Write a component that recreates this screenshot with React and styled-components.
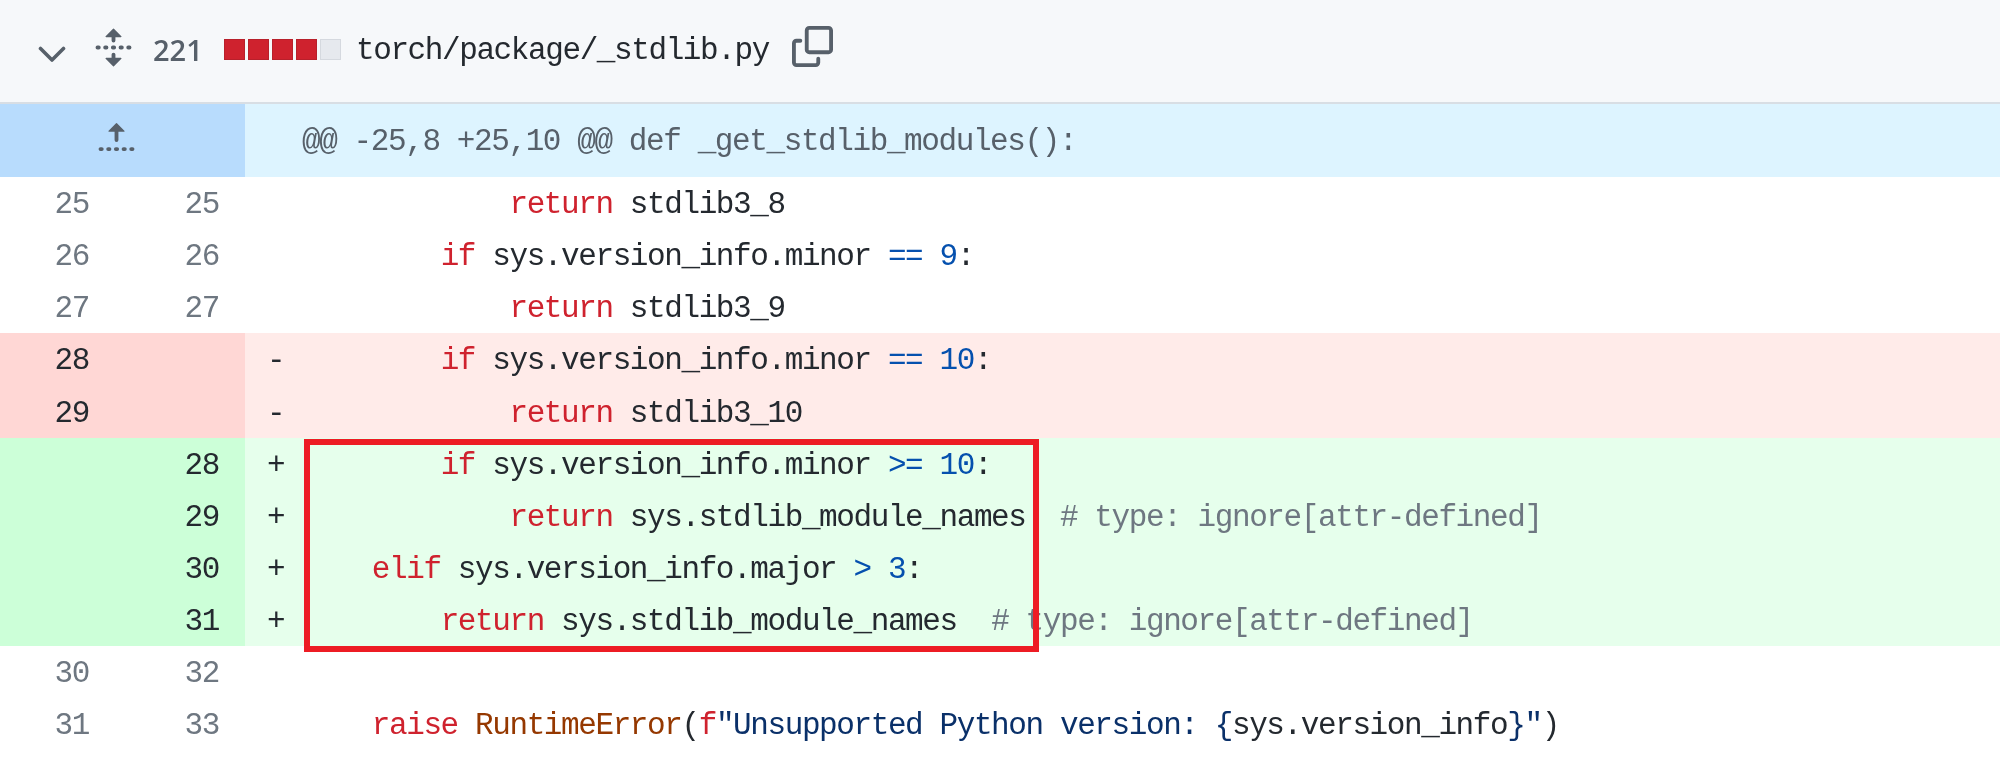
import React from "react";
import styled, { createGlobalStyle } from "styled-components";

const Global = createGlobalStyle`
  html, body { margin: 0; padding: 0; background: #fff; }
  #root { width: 2000px; height: 765px; overflow: hidden; }
`;

const MONO = `"Liberation Mono", "DejaVu Sans Mono", monospace`;

const Page = styled.div`
  width: 2000px;
  height: 765px;
  background: #fff;
  overflow: hidden;
  filter: blur(0.7px);
  font-family: ${MONO};
  font-size: 31px;
  letter-spacing: -1.4px;
  color: #24292f;
`;

const Toolbar = styled.header`
  height: 102px;
  box-sizing: content-box;
  display: flex;
  align-items: center;
  padding-left: 38px;
  background: #f6f8fa;
  border-bottom: 2px solid #d8dee4;
`;

const Chevron = styled.svg`
  width: 28px;
  height: 17px;
  margin-top: 6px;
  fill: none;
  stroke: #57606a;
  stroke-width: 3.6;
  stroke-linecap: round;
  stroke-linejoin: round;
`;

const ToolIcon = styled.svg`
  width: 41px;
  height: 41px;
  fill: #57606a;
  flex: none;
  margin-left: ${(p) => p.$left}px;
  margin-top: ${(p) => p.$top || 0}px;
`;

const Count = styled.span`
  margin-left: 19px;
  margin-top: -3px;
  width: 71px;
  font-family: "Open Sans", "Liberation Sans", sans-serif;
  font-size: 29px;
  font-weight: 600;
  letter-spacing: 0;
  color: #57606a;
`;

const DiffStat = styled.span`
  display: flex;
  gap: 3px;
  width: 132px;
  margin-top: -3px;
`;

const StatBlock = styled.span`
  width: 21px;
  height: 21px;
  box-sizing: border-box;
  background: ${(p) => (p.$on ? "#cf222e" : "#e6e9ee")};
  border: 1px solid ${(p) => (p.$on ? "#b8202b" : "#d5d9df")};
`;

const FileName = styled.span`
  color: #24292f;
  margin-top: -2px;
`;

const Table = styled.div`
  display: flex;
  flex-direction: column;
`;

const HunkRow = styled.div`
  display: grid;
  grid-template-columns: 245px 1fr;
  grid-template-rows: 73px;
  height: 73px;
`;

const HunkGutter = styled.div`
  background: #b8dcfd;
  padding-left: 96px;
  padding-top: 15px;
  box-sizing: border-box;
`;

const HunkIcon = styled.svg`
  display: block;
  width: 41px;
  height: 41px;
  fill: #57606a;
`;

const HunkCode = styled.div`
  background: #ddf4ff;
  color: #57606a;
  padding-left: 57px;
  line-height: 76px;
  white-space: pre;
`;

const tone = {
  ctx: { num: "#ffffff", code: "#ffffff", ink: "#6e7781" },
  del: { num: "#ffd7d5", code: "#ffebe9", ink: "#24292f" },
  add: { num: "#ccffd8", code: "#e6ffec", ink: "#24292f" },
};

const Row = styled.div`
  display: grid;
  grid-template-columns: 115px 130px 1fr;
  grid-template-rows: 52.15px;
  height: 52.15px;
  line-height: 56.5px;
`;

const LineNo = styled.div`
  background: ${(p) => tone[p.$kind].num};
  color: ${(p) => tone[p.$kind].ink};
  text-align: right;
  padding-right: 26px;
`;

const Code = styled.div`
  display: flex;
  background: ${(p) => tone[p.$kind].code};
  padding-left: 22px;
  white-space: pre;
`;

const Marker = styled.span`
  width: 36px;
  flex: none;
`;

const AddedGroup = styled.div`
  position: relative;
`;

const Annotation = styled.div`
  position: absolute;
  left: 304px;
  top: 1px;
  width: 735px;
  height: 213px;
  box-sizing: border-box;
  border: 6px solid #ed1c24;
  pointer-events: none;
`;

const Kw = styled.span`color: #cf222e;`;
const Num = styled.span`color: #0550ae;`;
const Fn = styled.span`color: #953800;`;
const Str = styled.span`color: #0a3069;`;
const Cm = styled.span`color: #6e7781;`;

const DiffLine = ({ kind, oldNo, newNo, mark = "", children }) => (
  <Row>
    <LineNo $kind={kind}>{oldNo}</LineNo>
    <LineNo $kind={kind}>{newNo}</LineNo>
    <Code $kind={kind}>
      <Marker>{mark}</Marker>
      <span>{children}</span>
    </Code>
  </Row>
);

const COPY_A =
  "M0 6.75C0 5.784.784 5 1.75 5h1.5a.75.75 0 0 1 0 1.5h-1.5a.25.25 0 0 0-.25.25v7.5c0 .138.112.25.25.25h7.5a.25.25 0 0 0 .25-.25v-1.5a.75.75 0 0 1 1.5 0v1.5A1.75 1.75 0 0 1 9.25 16h-7.5A1.75 1.75 0 0 1 0 14.25Z";
const COPY_B =
  "M5 1.75C5 .784 5.784 0 6.75 0h7.5C15.216 0 16 .784 16 1.75v7.5A1.75 1.75 0 0 1 14.25 11h-7.5A1.75 1.75 0 0 1 5 9.25Zm1.75-.25a.25.25 0 0 0-.25.25v7.5c0 .138.112.25.25.25h7.5a.25.25 0 0 0 .25-.25v-7.5a.25.25 0 0 0-.25-.25Z";
const UNFOLD =
  "m8.177.677 2.896 2.896a.25.25 0 0 1-.177.427H8.75v1.25a.75.75 0 0 1-1.5 0V4H5.104a.25.25 0 0 1-.177-.427L7.823.677a.25.25 0 0 1 .354 0ZM7.25 10.75a.75.75 0 0 1 1.5 0V12h2.146a.25.25 0 0 1 .177.427l-2.896 2.896a.25.25 0 0 1-.354 0l-2.896-2.896A.25.25 0 0 1 5.104 12H7.25v-1.25Zm-5-2a.75.75 0 0 0 0-1.5h-.5a.75.75 0 0 0 0 1.5h.5ZM6 8a.75.75 0 0 1-.75.75h-.5a.75.75 0 0 1 0-1.5h.5A.75.75 0 0 1 6 8Zm2.25.75a.75.75 0 0 0 0-1.5h-.5a.75.75 0 0 0 0 1.5h.5ZM12 8a.75.75 0 0 1-.75.75h-.5a.75.75 0 0 1 0-1.5h.5A.75.75 0 0 1 12 8Zm2.25.75a.75.75 0 0 0 0-1.5h-.5a.75.75 0 0 0 0 1.5h.5Z";
const FOLD_UP =
  "M7.823 1.677 4.927 4.573A.25.25 0 0 0 5.104 5H7.25v3.236a.75.75 0 1 0 1.5 0V5h2.146a.25.25 0 0 0 .177-.427L8.177 1.677a.25.25 0 0 0-.354 0ZM13.75 11a.75.75 0 0 0 0 1.5h.5a.75.75 0 0 0 0-1.5h-.5Zm-3.75.75a.75.75 0 0 1 .75-.75h.5a.75.75 0 0 1 0 1.5h-.5a.75.75 0 0 1-.75-.75ZM7.75 11a.75.75 0 0 0 0 1.5h.5a.75.75 0 0 0 0-1.5h-.5ZM4 11.75a.75.75 0 0 1 .75-.75h.5a.75.75 0 0 1 0 1.5h-.5a.75.75 0 0 1-.75-.75ZM1.75 11a.75.75 0 0 0 0 1.5h.5a.75.75 0 0 0 0-1.5h-.5Z";

export default function App() {
  return (
    <Page>
      <Global />
      <Toolbar>
        <Chevron viewBox="0 0 28 17">
          <polyline points="2.5,2.5 14,14 25.5,2.5" />
        </Chevron>
        <ToolIcon viewBox="0 0 16 16" $left={27} $top={-8}>
          <path d={UNFOLD} />
        </ToolIcon>
        <Count>221</Count>
        <DiffStat>
          <StatBlock $on />
          <StatBlock $on />
          <StatBlock $on />
          <StatBlock $on />
          <StatBlock />
        </DiffStat>
        <FileName>torch/package/_stdlib.py</FileName>
        <ToolIcon viewBox="0 0 16 16" $left={23} $top={-10}>
          <path d={COPY_A} />
          <path d={COPY_B} />
        </ToolIcon>
      </Toolbar>
      <Table>
        <HunkRow>
          <HunkGutter>
            <HunkIcon viewBox="0 0 16 16">
              <path d={FOLD_UP} />
            </HunkIcon>
          </HunkGutter>
          <HunkCode>{"@@ -25,8 +25,10 @@ def _get_stdlib_modules():"}</HunkCode>
        </HunkRow>
        <DiffLine kind="ctx" oldNo="25" newNo="25">
          {"            "}<Kw>return</Kw>{" stdlib3_8"}
        </DiffLine>
        <DiffLine kind="ctx" oldNo="26" newNo="26">
          {"        "}<Kw>if</Kw>{" sys.version_info.minor "}<Num>==</Num>{" "}<Num>9</Num>{":"}
        </DiffLine>
        <DiffLine kind="ctx" oldNo="27" newNo="27">
          {"            "}<Kw>return</Kw>{" stdlib3_9"}
        </DiffLine>
        <DiffLine kind="del" oldNo="28" mark="-">
          {"        "}<Kw>if</Kw>{" sys.version_info.minor "}<Num>==</Num>{" "}<Num>10</Num>{":"}
        </DiffLine>
        <DiffLine kind="del" oldNo="29" mark="-">
          {"            "}<Kw>return</Kw>{" stdlib3_10"}
        </DiffLine>
        <AddedGroup>
          <DiffLine kind="add" newNo="28" mark="+">
            {"        "}<Kw>if</Kw>{" sys.version_info.minor "}<Num>&gt;=</Num>{" "}<Num>10</Num>{":"}
          </DiffLine>
          <DiffLine kind="add" newNo="29" mark="+">
            {"            "}<Kw>return</Kw>{" sys.stdlib_module_names  "}<Cm># type: ignore[attr-defined]</Cm>
          </DiffLine>
          <DiffLine kind="add" newNo="30" mark="+">
            {"    "}<Kw>elif</Kw>{" sys.version_info.major "}<Num>&gt;</Num>{" "}<Num>3</Num>{":"}
          </DiffLine>
          <DiffLine kind="add" newNo="31" mark="+">
            {"        "}<Kw>return</Kw>{" sys.stdlib_module_names  "}<Cm># type: ignore[attr-defined]</Cm>
          </DiffLine>
          <Annotation />
        </AddedGroup>
        <DiffLine kind="ctx" oldNo="30" newNo="32" />
        <DiffLine kind="ctx" oldNo="31" newNo="33">
          {"    "}<Kw>raise</Kw>{" "}<Fn>RuntimeError</Fn>{"("}<Kw>f</Kw>
          <Str>{'"Unsupported Python version: {'}</Str>{"sys.version_info"}<Str>{'}"'}</Str>{")"}
        </DiffLine>
      </Table>
    </Page>
  );
}
